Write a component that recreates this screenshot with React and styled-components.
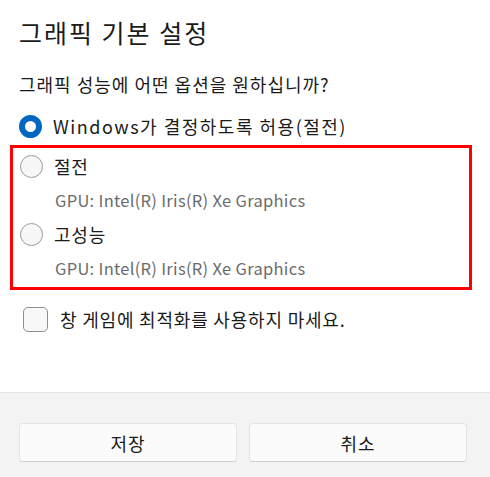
import styled, { createGlobalStyle } from "styled-components";

const GlobalStyle = createGlobalStyle`
    html, body {
        margin: 0;
        padding: 0;
        background: #ffffff;
    }
    * {
        box-sizing: border-box;
    }
`

const Dialog = styled.div`
    width: 490px;
    height: 477px;
    display: flex;
    flex-direction: column;
    font-family: "Noto Sans CJK KR", "Noto Sans", sans-serif;
    color: #1b1b1b;
    overflow: hidden;
`

const Content = styled.div`
    flex: 1;
    padding: 12px 18px 0 19px;
`

const Title = styled.h1`
    margin: 0;
    font-size: 25px;
    font-weight: 400;
    letter-spacing: 2px;
    line-height: 40px;
    height: 40px;
`

const Question = styled.p`
    margin: 16px 0 9px;
    font-size: 18px;
    letter-spacing: 1px;
    line-height: 32px;
    height: 32px;
`

const Row = styled.label`
    display: flex;
    align-items: center;
    gap: 11px;
    height: 34px;
    font-size: 18px;
    letter-spacing: ${p => p.$spacing || "0.8px"};
    cursor: pointer;
`

const Radio = styled.span`
    width: 23px;
    height: 23px;
    border-radius: 50%;
    flex-shrink: 0;
    background: ${p => p.checked ? "#ffffff" : "#f7f7f7"};
    border: ${p => p.checked ? "6px solid #0067c0" : "1px solid #9a9a9a"};
`

const Highlight = styled.div`
    margin: 2px 0 0 -9px;
    width: 462px;
    border: 3px solid #ff0000;
    padding: 1px 0 2px 7px;
`

const Desc = styled.div`
    height: 34px;
    line-height: 34px;
    padding-left: 35px;
    font-size: 16.5px;
    letter-spacing: 0.3px;
    color: #6b6b6b;
`

const CheckRow = styled(Row)`
    margin-top: 12px;
    padding-left: 4px;
    gap: 12px;
`

const Box = styled.span`
    width: 25px;
    height: 25px;
    border-radius: 5px;
    border: 1px solid #8f8f8f;
    background: #f8f8f8;
    flex-shrink: 0;
`

const Footer = styled.div`
    height: 85px;
    background: #f3f3f3;
    border-top: 1px solid #e5e5e5;
    display: grid;
    grid-template-columns: 1fr 1fr;
    gap: 12px;
    padding: 30px 23px 15px 19px;
`

const Button = styled.button`
    height: 39px;
    border-radius: 4px;
    border: 1px solid #e3e3e3;
    border-bottom-color: #cfcfcf;
    background: #fbfbfb;
    font-family: inherit;
    font-size: 18px;
    letter-spacing: 1px;
    color: #1b1b1b;
    cursor: pointer;
`

const options = [
    { id: "save", label: "절전", gpu: "GPU: Intel(R) Iris(R) Xe Graphics" },
    { id: "high", label: "고성능", gpu: "GPU: Intel(R) Iris(R) Xe Graphics" },
]

const App = () => {
    return (
        <>
            <GlobalStyle />
            <Dialog>
                <Content>
                    <Title>그래픽 기본 설정</Title>
                    <Question>그래픽 성능에 어떤 옵션을 원하십니까?</Question>
                    <Row $spacing="1.5px">
                        <Radio checked />
                        Windows가 결정하도록 허용(절전)
                    </Row>
                    <Highlight>
                        {options.map(o => (
                            <div key={o.id}>
                                <Row>
                                    <Radio />
                                    {o.label}
                                </Row>
                                <Desc>{o.gpu}</Desc>
                            </div>
                        ))}
                    </Highlight>
                    <CheckRow>
                        <Box />
                        창 게임에 최적화를 사용하지 마세요.
                    </CheckRow>
                </Content>
                <Footer>
                    <Button>저장</Button>
                    <Button>취소</Button>
                </Footer>
            </Dialog>
        </>
    );
}

export default App;
